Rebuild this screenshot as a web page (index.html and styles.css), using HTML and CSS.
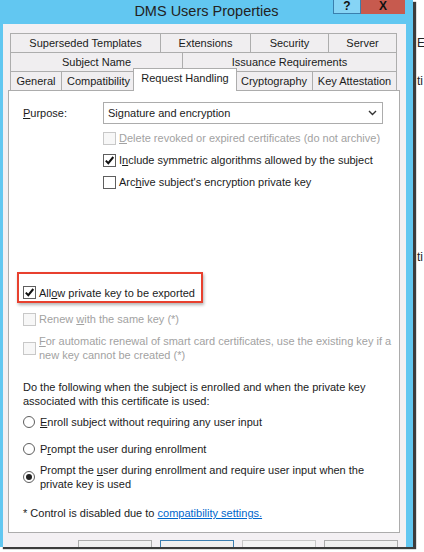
FILE: index.html
```html
<!DOCTYPE html>
<html lang="en">
<head>
  <meta charset="UTF-8">
  <title>DMS Users Properties</title>
  <link rel="stylesheet" href="styles.css">
</head>
<body>

  <div class="window">
    <div class="titlebar">
      <div class="title">DMS Users Properties</div>
      <div class="caption">
        <div class="cap-help">?</div>
        <div class="cap-close">X</div>
      </div>
    </div>

    <div class="client">
      <div class="tabs">
        <div class="tab-row row1">
          <div class="tab">Superseded Templates</div>
          <div class="tab">Extensions</div>
          <div class="tab">Security</div>
          <div class="tab">Server</div>
        </div>
        <div class="tab-row row2">
          <div class="tab">Subject Name</div>
          <div class="tab">Issuance Requirements</div>
        </div>
        <div class="tab-row row3">
          <div class="tab">General</div>
          <div class="tab">Compatibility</div>
          <div class="tab active">Request Handling</div>
          <div class="tab">Cryptography</div>
          <div class="tab">Key Attestation</div>
        </div>
      </div>

      <div class="panel">
        <div class="purpose">
          <label><u>P</u>urpose:</label>
          <div class="select">
            <span>Signature and encryption</span>
            <svg width="9" height="6" viewBox="0 0 9 6"><path d="M1 1 L4.5 4.5 L8 1" fill="none" stroke="#333" stroke-width="1.4"/></svg>
          </div>
        </div>

        <div class="checks">
          <div class="check disabled"><span class="box"></span><span><u>D</u>elete revoked or expired certificates (do not archive)</span></div>
          <div class="check"><span class="box on"></span><span>I<u>n</u>clude symmetric algorithms allowed by the subject</span></div>
          <div class="check"><span class="box"></span><span>Arc<u>h</u>ive subject's encryption private key</span></div>
        </div>

        <div class="export">
          <div class="check"><span class="box on"></span><span>All<u>o</u>w private key to be exported</span></div>
        </div>

        <div class="check disabled renew"><span class="box"></span><span>Renew <u>w</u>ith the same key (*)</span></div>
        <div class="check disabled smart">
          <span class="box"></span>
          <span class="lines">
            <span><u>F</u>or automatic renewal of smart card certificates, use the existing key if a</span>
            <span>new key cannot be created (*)</span>
          </span>
        </div>

        <p class="intro">
          <span>Do the following when the subject is enrolled and when the private key</span>
          <span>associated with this certificate is used:</span>
        </p>

        <div class="radio r1"><span class="dot"></span><span><u>E</u>nroll subject without requiring any user input</span></div>
        <div class="radio r2"><span class="dot"></span><span>P<u>r</u>ompt the user during enrollment</span></div>
        <div class="radio r3">
          <span class="dot on"></span>
          <span class="lines">
            <span>Prompt the <u>u</u>ser during enrollment and require user input when the</span>
            <span>private key is used</span>
          </span>
        </div>

        <p class="note">* Control is disabled due to <a href="#">compatibility settings.</a></p>
      </div>

      <div class="buttons">
        <button>OK</button>
        <button class="default">Cancel</button>
        <button class="off">Apply</button>
        <button>Help</button>
      </div>
    </div>
  </div>

  <div class="behind">
    <div class="frag f1">Er</div>
    <div class="frag f2">ti</div>
    <div class="frag f3">ti</div>
  </div>

</body>
</html>
```

FILE: styles.css
```css
body {
  margin: 0;
  background: #fff;
  font-family: "Liberation Sans", Arial, sans-serif;
  font-size: 11px;
  color: #1b1b1b;
  display: flex;
  height: 552px;
  overflow: hidden;
}

.window {
  width: 413px;
  height: 547px;
  flex: none;
  background: #62c7f1;
  box-shadow: 3px 2px 1px #3c3c3c;
  overflow: hidden;
  display: flex;
  flex-direction: column;
}

.titlebar {
  height: 24px;
  flex: none;
  display: flex;
  align-items: flex-start;
}

.title {
  flex: 1;
  padding-left: 80px;
  text-align: center;
  font-size: 14.5px;
  line-height: 22px;
  color: #222;
}

.caption {
  width: 80px;
  flex: none;
  display: flex;
  justify-content: flex-end;
  padding-right: 8px;
  box-sizing: border-box;
}

.cap-help, .cap-close {
  height: 14px;
  line-height: 13px;
  text-align: center;
  font-weight: bold;
  font-size: 12px;
  color: #111;
  flex: none;
}

.cap-help {
  width: 28px;
  box-sizing: border-box;
  background: #86d4f5;
  border: 1px solid #3a7fae;
  border-top: none;
}

.cap-close {
  width: 44px;
  background: #c75a4e;
}

.client {
  flex: 1;
  margin: 0 7px 0 3px;
  background: #f3f0f3;
  padding: 9px 0 0 5px;
}

/* onglets */
.tabs {
  margin-left: 2px;
  width: 387px;
}

.tab-row {
  display: grid;
  height: 19px;
}

.row1 { grid-template-columns: 150px 90px 78px 69px; }
.row2 { grid-template-columns: 172px 215px; }
.row3 { grid-template-columns: 51px 74px 100px 77px 85px; }

.tab {
  border: 1px solid #adadad;
  border-right: none;
  border-bottom: none;
  background: #f0eef0;
  text-align: center;
  line-height: 18px;
  white-space: nowrap;
}

.tab:last-child {
  border-right: 1px solid #adadad;
}

.tab.active {
  background: #fff;
  margin: -3px -2px -1px;
  border-right: 1px solid #adadad;
  position: relative;
  z-index: 1;
}

/* panneau */
.panel {
  width: 392px;
  height: 443px;
  box-sizing: border-box;
  border: 1px solid #acacac;
  background: #fff;
  padding-left: 14px;
}

.purpose {
  display: flex;
  align-items: center;
  margin-top: 11px;
  height: 22px;
}

.purpose label {
  width: 80px;
}

.select {
  width: 280px;
  height: 22px;
  box-sizing: border-box;
  border: 1px solid #acacac;
  display: flex;
  align-items: center;
  justify-content: space-between;
  padding: 0 5px 0 4px;
}

.checks {
  margin-left: 80px;
  margin-top: 3px;
}

.check, .radio {
  display: flex;
  align-items: center;
  gap: 3px;
  height: 22px;
}

.lines span, .intro span {
  display: block;
  white-space: nowrap;
}

.box {
  width: 13px;
  height: 13px;
  box-sizing: border-box;
  border: 1px solid #5e5e5e;
  background: #fff;
  flex: none;
}

.box.on {
  background: #fff url("data:image/svg+xml,%3Csvg xmlns='http://www.w3.org/2000/svg' width='11' height='11'%3E%3Cpath d='M1.8 5.6 L4.3 8.2 L9.3 2' fill='none' stroke='%23111' stroke-width='2'/%3E%3C/svg%3E") no-repeat center;
}

.disabled {
  color: #a2a2a2;
}

.disabled .box {
  border-color: #c8c8c8;
  background: #f7f7f7;
}

.export {
  margin-top: 79px;
  margin-left: -6px;
  width: 186px;
  box-sizing: border-box;
  border: 2px solid #e8402e;
  padding: 12px 0 2px 4px;
  box-shadow: 1px 2px 3px rgba(0, 0, 0, 0.3);
}

.export .check {
  height: 13px;
}

.renew {
  margin-top: 5px;
}

.smart {
  margin-top: 4px;
  height: 28px;
  line-height: 14px;
}

.intro {
  margin: 18px 0 0;
  line-height: 14px;
}

.radio {
  gap: 5px;
}

.dot {
  width: 12px;
  height: 12px;
  box-sizing: border-box;
  border: 1px solid #5e5e5e;
  border-radius: 50%;
  background: #fff;
  flex: none;
  display: flex;
  align-items: center;
  justify-content: center;
}

.dot.on::after {
  content: "";
  width: 6px;
  height: 6px;
  border-radius: 50%;
  background: #222;
}

.r1 { margin-top: 3px; }
.r2 { margin-top: 5px; }
.r3 {
  margin-top: 3px;
  height: 28px;
  line-height: 14px;
}

.note {
  margin: 15px 0 0;
  line-height: 14px;
}

.note a {
  color: #0066cc;
}

/* boutons */
.buttons {
  display: flex;
  justify-content: flex-end;
  gap: 8px;
  width: 390px;
  margin-top: 7px;
}

button {
  width: 74px;
  height: 23px;
  border: 1px solid #acacac;
  background: linear-gradient(#f2f2f2, #e5e5e5);
  font-family: inherit;
  font-size: 11px;
  color: #111;
  padding: 0;
}

button.default {
  border-color: #3c7fb1;
}

button.off {
  color: #a2a2a2;
  border-color: #c8c8c8;
  background: #f4f4f4;
}

/* fenetre derriere */
.behind {
  flex: 1;
  padding-left: 4px;
  font-size: 12px;
  color: #222;
  overflow: hidden;
  white-space: nowrap;
}

.f1 { margin-top: 36px; }
.f2 { margin-top: 24px; }
.f3 { margin-top: 162px; }
```
